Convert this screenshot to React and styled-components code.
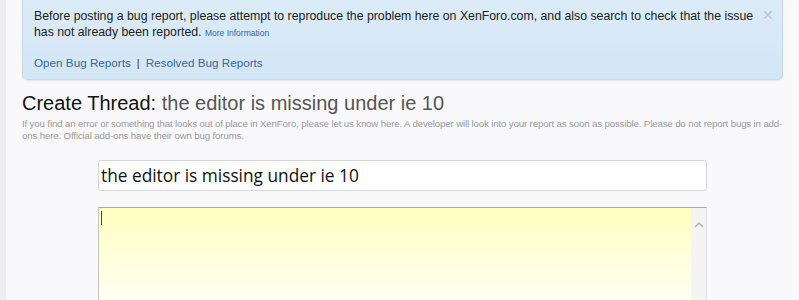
import React from 'react'
import styled, { createGlobalStyle } from 'styled-components'

const GlobalStyle = createGlobalStyle`
  html, body {
    margin: 0;
    padding: 0;
    background: #f9f9fc;
  }
  body {
    font-family: "DejaVu Sans", "Liberation Sans", sans-serif;
    color: #222;
  }
`

const Page = styled.div`
  display: flex;
  width: 799px;
  height: 300px;
  overflow: hidden;
  background: #f9f9fc;
`

const Gutter = styled.div`
  width: 6px;
  flex-shrink: 0;
  background: #eceef1;
`

const Content = styled.div`
  flex: 1;
  padding: 0 16px;
`

const Notice = styled.div`
  position: relative;
  background: linear-gradient(to bottom, #dcebf8, #d3e6f6);
  border: 1px solid #c9d9e8;
  border-top: none;
  border-radius: 0 0 5px 5px;
  box-shadow: 0 1px 2px rgba(0, 0, 0, 0.08);
  padding: 8px 24px 8px 11px;
  font-family: "Liberation Sans", sans-serif;
  font-size: 12.3px;
  line-height: 16px;
  color: #222;
`

const SmallLink = styled.a`
  font-size: 8.5px;
  line-height: 10px;
  color: #366a9b;
  text-decoration: none;
`

const LinkRow = styled.div`
  margin-top: 15px;
  display: flex;
  align-items: center;
  gap: 6px;
  font-size: 11.7px;
`

const Link = styled.a`
  color: #366a9b;
  text-decoration: none;
`

const Sep = styled.span`
  color: #333;
  font-size: 11px;
`

const Close = styled.span`
  position: absolute;
  right: 8px;
  top: 7px;
  color: #b9c7d4;
  font-size: 14px;
`

const Title = styled.h1`
  margin: 11px 0 3px;
  font-family: "Liberation Sans", sans-serif;
  font-weight: normal;
  font-size: 20px;
  line-height: 24px;
  color: #111;
`

const TitleName = styled.span`
  color: #555;
`

const Desc = styled.p`
  margin: 0;
  font-family: "Liberation Sans", sans-serif;
  font-size: 9.7px;
  letter-spacing: -0.15px;
  line-height: 12px;
  color: #9a9a9a;
`

const Form = styled.div`
  margin-top: 18px;
  padding: 0 76px;
  display: flex;
  flex-direction: column;
  gap: 16px;
`

const TitleInput = styled.div`
  height: 29px;
  background: #fff;
  border: 1px solid #d6d6da;
  border-radius: 3px;
  padding: 0 2px;
  display: flex;
  align-items: center;
  font-family: "Open Sans", sans-serif;
  font-size: 17.3px;
  color: #111;
`

const Editor = styled.div`
  height: 110px;
  display: flex;
  border-top: 1px solid #a9a9a9;
  border-left: 1px solid #c4c4c4;
  border-right: 1px solid #dcdcdc;
`

const EditArea = styled.div`
  flex: 1;
  background: linear-gradient(to bottom, #ffffc0, #fffff2 90px);
  padding: 3px 2px;
`

const Caret = styled.div`
  width: 1px;
  height: 14px;
  background: #444;
`

const Scrollbar = styled.div`
  width: 15px;
  background: #f4f4f5;
  display: flex;
  justify-content: center;
  padding-top: 14px;
  box-sizing: border-box;
`

export default function App() {
  return (
    <Page>
      <GlobalStyle />
      <Gutter />
      <Content>
        <Notice>
          Before posting a bug report, please attempt to reproduce the problem here on XenForo.com, and also search to check that the issue has not already been reported.{' '}
          <SmallLink href="#">More Information</SmallLink>
          <LinkRow>
            <Link href="#">Open Bug Reports</Link>
            <Sep>|</Sep>
            <Link href="#">Resolved Bug Reports</Link>
          </LinkRow>
          <Close>✕</Close>
        </Notice>
        <Title>
          Create Thread: <TitleName>the editor is missing under ie 10</TitleName>
        </Title>
        <Desc>
          If you find an error or something that looks out of place in XenForo, please let us know here. A developer will look into your report as soon as possible. Please do not report bugs in add-ons here. Official add-ons have their own bug forums.
        </Desc>
        <Form>
          <TitleInput>the editor is missing under ie 10</TitleInput>
          <Editor>
            <EditArea>
              <Caret />
            </EditArea>
            <Scrollbar>
              <svg width="10" height="6" viewBox="0 0 10 6">
                <path d="M1 5 L5 1 L9 5" fill="none" stroke="#b5b5b5" strokeWidth="1.5" />
              </svg>
            </Scrollbar>
          </Editor>
        </Form>
      </Content>
    </Page>
  )
}
